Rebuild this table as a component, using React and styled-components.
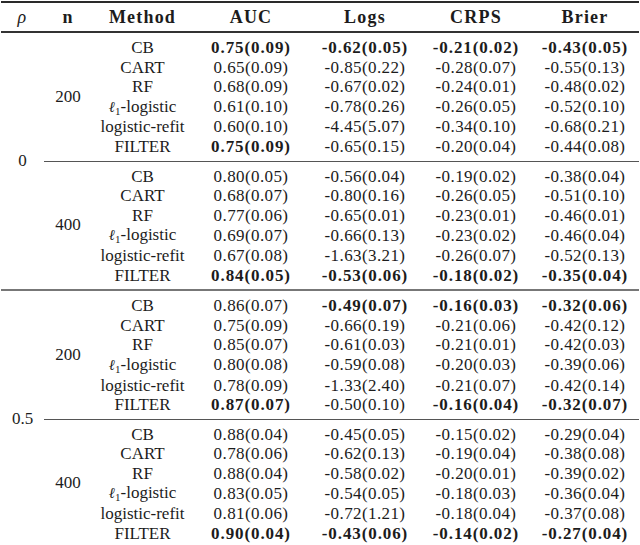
import React from 'react';
import styled, { createGlobalStyle } from 'styled-components';

const GlobalStyle = createGlobalStyle`
  html, body {
    margin: 0;
    padding: 0;
    background: #fff;
    font-family: "Liberation Serif", "Times New Roman", "DejaVu Serif", serif;
  }
`;

const Table = styled.table`
  width: 638px;
  margin: 1px 1px 0;
  border-collapse: collapse;
  table-layout: fixed;
  font-family: "Liberation Serif", "Times New Roman", serif;
  font-size: 17px;
  color: #1c1c1c;
  border-top: 2px solid #2a2a2a;
  border-bottom: 2px solid #2a2a2a;
`;

const Col = styled.col`
  width: ${(p) => p.$w}px;
`;

const Head = styled.th`
  height: 28px;
  padding: 0;
  font-family: "Liberation Serif", "Times New Roman", serif;
  font-size: 18px;
  font-weight: 700;
  letter-spacing: 1.2px;
  text-align: center;
  border-bottom: 2px solid #333;
`;

const Cell = styled.td`
  padding: ${(p) => (p.$first ? '5px' : '0')} 0 ${(p) => (p.$last ? '4px' : '0')};
  height: 19.6px;
  line-height: 19.6px;
  font-family: "Liberation Serif", "Times New Roman", serif;
  text-align: center;
  white-space: nowrap;
  font-weight: ${(p) => (p.$bold ? 700 : 400)};
  letter-spacing: ${(p) => (p.$bold ? '0.9px' : p.$num ? '0.4px' : '0')};
  border-top: ${(p) => p.$rule || 'none'};
`;

const Span = styled.td`
  padding: 0;
  font-family: "Liberation Serif", "Times New Roman", serif;
  text-align: center;
  vertical-align: middle;
  border-top: ${(p) => p.$rule || 'none'};
`;

const Greek = styled.i`
  font-family: "Liberation Serif", serif;
  font-weight: 400;
`;

const Ell = styled.i`
  font-family: "DejaVu Serif", serif;
  font-size: 15px;
`;

const Sub = styled.span`
  display: inline-block;
  font-size: 11px;
  line-height: 0;
  vertical-align: -3px;
`;

const methods = ['CB', 'CART', 'RF', 'l1', 'logistic-refit', 'FILTER'];
const widths = [43, 48, 101, 116, 112, 110, 108];
const heads = ['ρ', 'n', 'Method', 'AUC', 'Logs', 'CRPS', 'Brier'];

// each value: [text, bold]
const groups = [
  {
    rho: '0',
    n: '200',
    rows: [
      [['0.75(0.09)', 1], ['-0.62(0.05)', 1], ['-0.21(0.02)', 1], ['-0.43(0.05)', 1]],
      [['0.65(0.09)'], ['-0.85(0.22)'], ['-0.28(0.07)'], ['-0.55(0.13)']],
      [['0.68(0.09)'], ['-0.67(0.02)'], ['-0.24(0.01)'], ['-0.48(0.02)']],
      [['0.61(0.10)'], ['-0.78(0.26)'], ['-0.26(0.05)'], ['-0.52(0.10)']],
      [['0.60(0.10)'], ['-4.45(5.07)'], ['-0.34(0.10)'], ['-0.68(0.21)']],
      [['0.75(0.09)', 1], ['-0.65(0.15)'], ['-0.20(0.04)'], ['-0.44(0.08)']],
    ],
  },
  {
    n: '400',
    rows: [
      [['0.80(0.05)'], ['-0.56(0.04)'], ['-0.19(0.02)'], ['-0.38(0.04)']],
      [['0.68(0.07)'], ['-0.80(0.16)'], ['-0.26(0.05)'], ['-0.51(0.10)']],
      [['0.77(0.06)'], ['-0.65(0.01)'], ['-0.23(0.01)'], ['-0.46(0.01)']],
      [['0.69(0.07)'], ['-0.66(0.13)'], ['-0.23(0.02)'], ['-0.46(0.04)']],
      [['0.67(0.08)'], ['-1.63(3.21)'], ['-0.26(0.07)'], ['-0.52(0.13)']],
      [['0.84(0.05)', 1], ['-0.53(0.06)', 1], ['-0.18(0.02)', 1], ['-0.35(0.04)', 1]],
    ],
  },
  {
    rho: '0.5',
    n: '200',
    rows: [
      [['0.86(0.07)'], ['-0.49(0.07)', 1], ['-0.16(0.03)', 1], ['-0.32(0.06)', 1]],
      [['0.75(0.09)'], ['-0.66(0.19)'], ['-0.21(0.06)'], ['-0.42(0.12)']],
      [['0.85(0.07)'], ['-0.61(0.03)'], ['-0.21(0.01)'], ['-0.42(0.03)']],
      [['0.80(0.08)'], ['-0.59(0.08)'], ['-0.20(0.03)'], ['-0.39(0.06)']],
      [['0.78(0.09)'], ['-1.33(2.40)'], ['-0.21(0.07)'], ['-0.42(0.14)']],
      [['0.87(0.07)', 1], ['-0.50(0.10)'], ['-0.16(0.04)', 1], ['-0.32(0.07)', 1]],
    ],
  },
  {
    n: '400',
    rows: [
      [['0.88(0.04)'], ['-0.45(0.05)'], ['-0.15(0.02)'], ['-0.29(0.04)']],
      [['0.78(0.06)'], ['-0.62(0.13)'], ['-0.19(0.04)'], ['-0.38(0.08)']],
      [['0.88(0.04)'], ['-0.58(0.02)'], ['-0.20(0.01)'], ['-0.39(0.02)']],
      [['0.83(0.05)'], ['-0.54(0.05)'], ['-0.18(0.03)'], ['-0.36(0.04)']],
      [['0.81(0.06)'], ['-0.72(1.21)'], ['-0.18(0.04)'], ['-0.37(0.08)']],
      [['0.90(0.04)', 1], ['-0.43(0.06)', 1], ['-0.14(0.02)', 1], ['-0.27(0.04)', 1]],
    ],
  },
];

const thinRule = '1px solid #555';
const thickRule = '2px solid #777';

const MethodName = ({ name }) =>
  name === 'l1' ? (
    <>
      <Ell>ℓ</Ell>
      <Sub>1</Sub>-logistic
    </>
  ) : (
    name
  );

export default function App() {
  return (
    <>
      <GlobalStyle />
      <Table>
        <colgroup>
          {widths.map((w, i) => (
            <Col key={i} $w={w} />
          ))}
        </colgroup>
        <thead>
          <tr>
            {heads.map((h) => (
              <Head key={h}>{h === 'ρ' ? <Greek>ρ</Greek> : h}</Head>
            ))}
          </tr>
        </thead>
        <tbody>
          {groups.map((g, gi) =>
            g.rows.map((vals, ri) => {
              const first = ri === 0;
              const last = ri === g.rows.length - 1;
              let rule;
              if (first && gi === 2) rule = thickRule;
              else if (first && gi % 2 === 1) rule = thinRule;
              return (
                <tr key={`${gi}-${ri}`}>
                  {first && g.rho && (
                    <Span rowSpan={12} $rule={gi === 2 ? thickRule : undefined}>
                      {g.rho}
                    </Span>
                  )}
                  {first && (
                    <Span rowSpan={6} $rule={rule}>
                      {g.n}
                    </Span>
                  )}
                  <Cell $first={first} $last={last} $rule={rule}>
                    <MethodName name={methods[ri]} />
                  </Cell>
                  {vals.map(([text, bold], ci) => (
                    <Cell
                      key={ci}
                      $first={first}
                      $last={last}
                      $rule={rule}
                      $bold={!!bold}
                      $num
                    >
                      {text}
                    </Cell>
                  ))}
                </tr>
              );
            })
          )}
        </tbody>
      </Table>
    </>
  );
}
